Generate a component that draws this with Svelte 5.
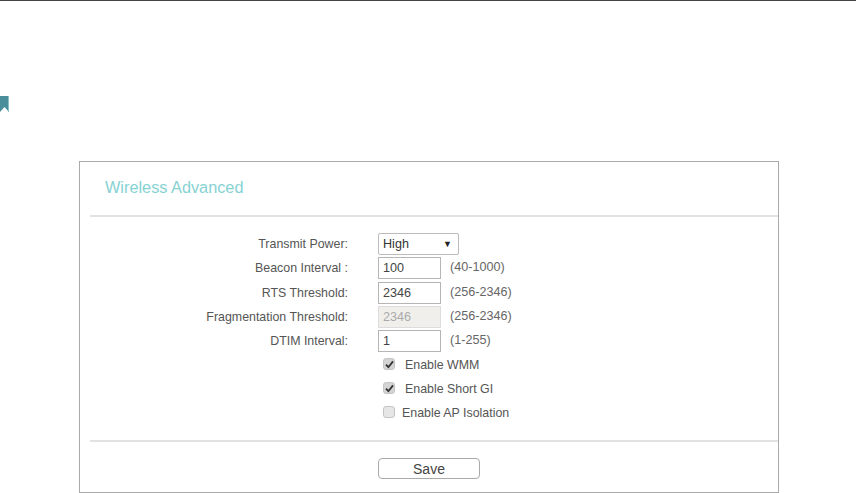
<script lang="ts">
	const fields = [
		{ label: 'Beacon Interval :', value: '100', hint: '(40-1000)', disabled: false },
		{ label: 'RTS Threshold:', value: '2346', hint: '(256-2346)', disabled: false },
		{ label: 'Fragmentation Threshold:', value: '2346', hint: '(256-2346)', disabled: true },
		{ label: 'DTIM Interval:', value: '1', hint: '(1-255)', disabled: false }
	];

	const options = [
		{ label: 'Enable WMM', checked: true, tight: false },
		{ label: 'Enable Short GI', checked: true, tight: false },
		{ label: 'Enable AP Isolation', checked: false, tight: true }
	];
</script>

<div class="page">
	<div class="ribbon">
		<svg width="10" height="16" viewBox="0 0 10 16" aria-hidden="true">
			<path d="M0 0H9V16L4.5 11L0 16Z" fill="#4a8e9c" />
			<rect x="8" y="0" width="1" height="16" fill="#8fbcc5" />
		</svg>
	</div>

	<section class="panel">
		<h1>Wireless Advanced</h1>
		<hr />

		<form class="form">
			<div class="row">
				<span class="label">Transmit Power:</span>
				<div class="select">
					<span>High</span>
					<span class="caret">▼</span>
				</div>
			</div>

			{#each fields as f}
				<div class="row">
					<span class="label">{f.label}</span>
					<div class="input" class:disabled={f.disabled}>{f.value}</div>
					<span class="hint">{f.hint}</span>
				</div>
			{/each}

			<div class="checks">
				{#each options as o}
					<div class="check">
						<span class="box" class:on={o.checked}>
							{#if o.checked}
								<svg width="9" height="9" viewBox="0 0 9 9" aria-hidden="true">
									<path d="M1 4.6L3.4 7.2L8 1.4" fill="none" stroke="#333" stroke-width="1.8" />
								</svg>
							{/if}
						</span>
						<span class="check-label" class:tight={o.tight}>{o.label}</span>
					</div>
				{/each}
			</div>
		</form>

		<hr />
		<div class="actions">
			<button type="button">Save</button>
		</div>
	</section>
</div>

<style>
	:global(body) {
		margin: 0;
		background: #fff;
	}

	.page {
		height: 493px;
		overflow: hidden;
		border-top: 1px solid #444;
		box-sizing: border-box;
		font-family: 'Liberation Sans', Arial, sans-serif;
		font-size: 12.4px;
		color: #555;
	}

	.ribbon {
		height: 16px;
		margin-top: 95px;
		line-height: 0;
	}

	.panel {
		width: 700px;
		height: 332px;
		box-sizing: border-box;
		margin: 49px 0 0 79px;
		border: 1px solid #aaa;
		padding-left: 10px;
		display: flex;
		flex-direction: column;
	}

	h1 {
		margin: 0;
		height: 53px;
		padding: 15px 0 0 15px;
		box-sizing: border-box;
		font-size: 16.3px;
		line-height: 20px;
		font-weight: 400;
		color: #86d2d3;
	}

	hr {
		margin: 0;
		height: 2px;
		border: 0;
		background: #e2e2e2;
		flex: none;
	}

	.form {
		flex: 1;
		padding-top: 15px;
	}

	.row {
		display: flex;
		align-items: center;
		height: 24.25px;
	}

	.label {
		width: 258px;
		text-align: right;
		margin-right: 30px;
		flex: none;
		color: #555;
	}

	.select {
		width: 81px;
		height: 22px;
		box-sizing: border-box;
		border: 1px solid #bbb;
		border-radius: 2px;
		padding: 0 6px 0 4px;
		display: flex;
		align-items: center;
		justify-content: space-between;
		font-size: 12.6px;
		color: #333;
	}

	.caret {
		font-size: 9px;
		color: #222;
	}

	.input {
		width: 63px;
		height: 22px;
		box-sizing: border-box;
		border: 1px solid #b5b5b5;
		padding-left: 4px;
		line-height: 20px;
		font-size: 12.6px;
		color: #444;
	}

	.input.disabled {
		background: #f0efeb;
		border-color: #dcdcdc;
		color: #aaa;
	}

	.hint {
		margin: 0 0 2px 9px;
		font-size: 12.6px;
		color: #666;
	}

	.checks {
		margin-top: -1px;
		padding-left: 293px;
	}

	.check {
		display: flex;
		align-items: center;
		height: 24px;
	}

	.box {
		width: 12px;
		height: 12px;
		box-sizing: border-box;
		border: 1px solid #c4c4c4;
		border-radius: 3px;
		background: #e6e6e6;
		display: flex;
		align-items: center;
		justify-content: center;
		flex: none;
	}

	.box.on {
		background: #d4d4d4;
	}

	.check-label {
		margin-left: 10px;
		padding-top: 1px;
	}

	.check-label.tight {
		margin-left: 7px;
	}

	.actions {
		height: 50px;
		padding: 16px 0 0 288px;
		box-sizing: border-box;
	}

	button {
		width: 102px;
		height: 21px;
		padding: 0;
		background: #fff;
		border: 1px solid #aaa;
		border-radius: 4px;
		font: inherit;
		font-size: 14px;
		line-height: 20px;
		color: #444;
	}
</style>
